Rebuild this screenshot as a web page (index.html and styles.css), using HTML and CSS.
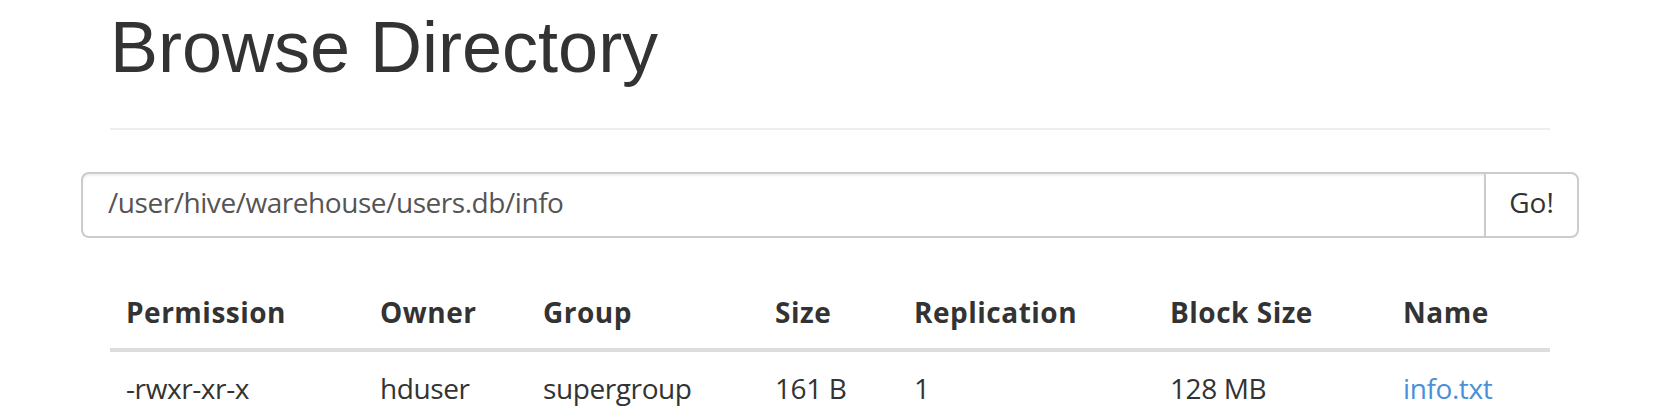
FILE: index.html
```html
<!DOCTYPE html>
<html>
<head>
<meta charset="utf-8">
<title>Browse Directory</title>
<link rel="stylesheet" href="styles.css">
</head>
<body>
<div class="container">
  <div class="page-header">
    <h1 class="title">Browse Directory</h1>
  </div>
  <form class="input-group">
    <div class="path-input">/user/hive/warehouse/users.db/info</div>
    <button type="button" class="go-btn">Go!</button>
  </form>
  <table class="listing">
    <colgroup>
      <col class="c1"><col class="c2"><col class="c3"><col class="c4"><col class="c5"><col class="c6"><col class="c7">
    </colgroup>
    <thead>
      <tr>
        <th>Permission</th>
        <th>Owner</th>
        <th>Group</th>
        <th>Size</th>
        <th>Replication</th>
        <th>Block Size</th>
        <th>Name</th>
      </tr>
    </thead>
    <tbody>
      <tr>
        <td>-rwxr-xr-x</td>
        <td>hduser</td>
        <td>supergroup</td>
        <td>161 B</td>
        <td>1</td>
        <td>128 MB</td>
        <td><a class="file-link" href="#">info.txt</a></td>
      </tr>
    </tbody>
  </table>
</div>
</body>
</html>
```
FILE: styles.css
```css
html, body {
  margin: 0;
  padding: 0;
  background: #fff;
}

body {
  font-family: "Open Sans", "Liberation Sans", sans-serif;
  color: #333;
}

.container {
  width: 1440px;
  margin-left: 110px;
}

.page-header {
  padding-bottom: 41px;
  border-bottom: 2px solid #eee;
}

.title {
  margin: 8px 0 0 0;
  font-family: "Liberation Sans", Arial, sans-serif;
  font-weight: 400;
  font-size: 72px;
  line-height: 79px;
  color: #333;
}

.input-group {
  display: flex;
  margin: 42px -29px 0 -29px;
  height: 66px;
}

.path-input {
  flex: 1;
  box-sizing: border-box;
  height: 66px;
  padding: 8px 24px 14px 25px;
  border: 2px solid #ccc;
  border-right: none;
  border-radius: 8px 0 0 8px;
  font-size: 28px;
  line-height: 40px;
  letter-spacing: -0.45px;
  color: #555;
  box-shadow: inset 0 2px 2px rgba(0,0,0,0.06);
}

.go-btn {
  box-sizing: border-box;
  width: 95px;
  height: 66px;
  padding: 8px 0 14px 0;
  border: 2px solid #ccc;
  border-radius: 0 8px 8px 0;
  background: #fff;
  font-family: "Open Sans", "Liberation Sans", sans-serif;
  font-size: 28px;
  line-height: 40px;
  color: #333;
}

.listing {
  margin-top: 38px;
  width: 1440px;
  table-layout: fixed;
  border-collapse: collapse;
  border-spacing: 0;
}

.c1 { width: 252px; }
.c2 { width: 163px; }
.c3 { width: 232px; }
.c4 { width: 139px; }
.c5 { width: 256px; }
.c6 { width: 233px; }
.c7 { width: 165px; }

.listing th,
.listing td {
  padding: 16px 18px;
  text-align: left;
  font-size: 28px;
  line-height: 40px;
  white-space: nowrap;
  vertical-align: top;
}

.listing th:first-child,
.listing td:first-child {
  padding-left: 16px;
}

.listing th {
  font-weight: 700;
  letter-spacing: 0.5px;
  border-bottom: 4px solid #ddd;
}

.listing td {
  font-weight: 400;
  letter-spacing: -0.4px;
}

.file-link {
  color: #4a90d9;
  text-decoration: none;
}
```
